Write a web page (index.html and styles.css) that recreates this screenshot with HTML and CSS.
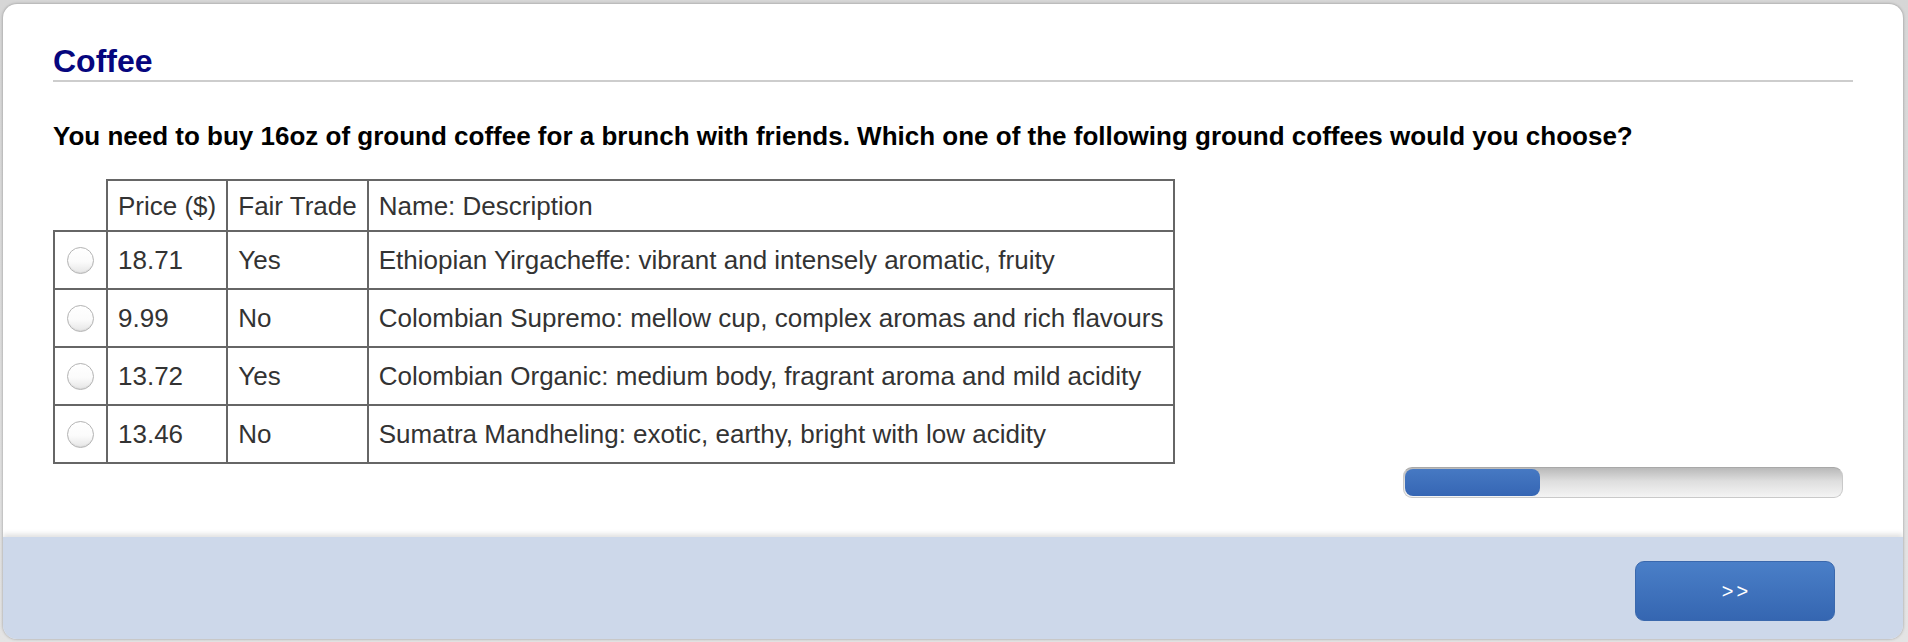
FILE: index.html
```html
<!DOCTYPE html>
<html lang="en">
<head>
<meta charset="utf-8">
<title>Coffee</title>
<link rel="stylesheet" href="styles.css">
</head>
<body>
<div class="page">
  <div class="card">
    <main class="main">
      <h1 class="title">Coffee</h1>
      <p class="question">You need to buy 16oz of ground coffee for a brunch with friends. Which one of the following ground coffees would you choose?</p>
      <table class="choices">
        <thead>
          <tr>
            <th class="blank"></th>
            <th>Price ($)</th>
            <th>Fair Trade</th>
            <th>Name: Description</th>
          </tr>
        </thead>
        <tbody>
          <tr>
            <td class="pick"><input class="radio" type="radio" name="coffee"></td>
            <td>18.71</td>
            <td>Yes</td>
            <td>Ethiopian Yirgacheffe: vibrant and intensely aromatic, fruity</td>
          </tr>
          <tr>
            <td class="pick"><input class="radio" type="radio" name="coffee"></td>
            <td>9.99</td>
            <td>No</td>
            <td>Colombian Supremo: mellow cup, complex aromas and rich flavours</td>
          </tr>
          <tr>
            <td class="pick"><input class="radio" type="radio" name="coffee"></td>
            <td>13.72</td>
            <td>Yes</td>
            <td>Colombian Organic: medium body, fragrant aroma and mild acidity</td>
          </tr>
          <tr>
            <td class="pick"><input class="radio" type="radio" name="coffee"></td>
            <td>13.46</td>
            <td>No</td>
            <td>Sumatra Mandheling: exotic, earthy, bright with low acidity</td>
          </tr>
        </tbody>
      </table>
      <div class="progress-row">
        <div class="progress"><div class="progress-fill" style="width: 31%"></div></div>
      </div>
    </main>
    <footer class="footer">
      <button class="next" type="button">&gt;&gt;</button>
    </footer>
  </div>
</div>
</body>
</html>
```

FILE: styles.css
```css
html, body {
  margin: 0;
  padding: 0;
}
body {
  background: #dcdcdc;
  font-family: "Liberation Sans", Arial, sans-serif;
}
.page {
  padding: 4px 5px 3px 3px;
  height: 642px;
  box-sizing: border-box;
  background: linear-gradient(#d6d6d6, #e4e4e4);
}
.card {
  height: 635px;
  background: #fff;
  border-radius: 14px;
  overflow: hidden;
  box-shadow: 0 0 3px rgba(0, 0, 0, 0.35);
  display: flex;
  flex-direction: column;
}
.main {
  flex: 1;
  padding: 39px 50px 0 50px;
}
.title {
  margin: 0;
  font-size: 32px;
  font-weight: bold;
  line-height: normal;
  color: #06067e;
  border-bottom: 2px solid #cdcdcd;
}
.question {
  margin: 39px 0 0 0;
  font-size: 26px;
  font-weight: bold;
  line-height: normal;
  color: #000;
}
.choices {
  margin-top: 27px;
  border-collapse: collapse;
  font-size: 26px;
  line-height: 30px;
  color: #333;
}
.choices th,
.choices td {
  border: 2px solid #666;
  text-align: left;
  font-weight: normal;
  white-space: nowrap;
}
.choices th {
  padding: 10px 10px 9px 10px;
}
.choices td {
  padding: 13px 10px 13px 10px;
}
.choices th.blank {
  border: none;
}
.choices td.pick {
  padding: 0 12px;
  text-align: center;
  vertical-align: middle;
}
.radio {
  appearance: none;
  -webkit-appearance: none;
  display: block;
  margin: 0;
  width: 27px;
  height: 27px;
  border-radius: 50%;
  border: 1px solid #b4b4b4;
  background: linear-gradient(#ffffff 0%, #fbfbfb 55%, #e6e6e6 100%);
  box-shadow: inset 0 -1px 1px rgba(0, 0, 0, 0.06);
}
.progress-row {
  display: flex;
  justify-content: flex-end;
  margin-top: 3px;
  padding-right: 10px;
}
.progress {
  width: 440px;
  height: 31px;
  box-sizing: border-box;
  border-radius: 9px;
  border: 1px solid #c9c9c9;
  border-top-color: #a8a8a8;
  background: linear-gradient(#b9b9b9 0%, #dedede 45%, #f4f4f4 100%);
  padding: 1px;
}
.progress-fill {
  height: 100%;
  border-radius: 8px;
  background: linear-gradient(#4679c3, #3666b4);
}
.footer {
  height: 102px;
  box-sizing: border-box;
  background: #cdd8ea;
  box-shadow: 0 -3px 5px rgba(0, 0, 0, 0.12);
  display: flex;
  justify-content: flex-end;
  align-items: flex-start;
  padding: 24px 68px 0 0;
}
.next {
  width: 200px;
  height: 60px;
  border-radius: 9px;
  border: 1px solid #3a68ad;
  background: linear-gradient(#4a7fc8, #3566b1);
  color: #fff;
  font-family: "Liberation Sans", Arial, sans-serif;
  font-size: 20px;
  letter-spacing: 3px;
  padding: 0 0 0 3px;
  cursor: pointer;
}
```
